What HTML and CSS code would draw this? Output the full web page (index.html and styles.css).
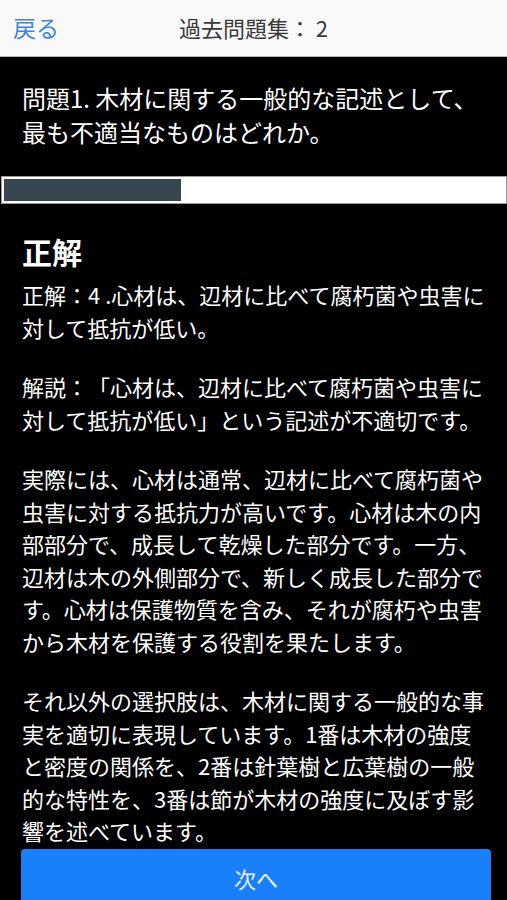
FILE: index.html
```html
<!DOCTYPE html>
<html lang="ja">
<head>
  <meta charset="UTF-8" />
  <meta name="viewport" content="width=device-width, initial-scale=1.0" />
  <title>過去問題集： 2</title>
  <link rel="stylesheet" href="styles.css">
</head>
<body>
  <header class="nav">
    <a class="back" href="#">戻る</a>
    <h1 class="nav-title">過去問題集： 2</h1>
    <span></span>
  </header>

  <section class="question">
    <p>問題1. 木材に関する一般的な記述として、最も不適当なものはどれか。</p>
  </section>

  <div class="progress">
    <div class="progress-fill"></div>
  </div>

  <section class="answer">
    <h2 class="answer-title">正解</h2>
    <p>正解：4 .心材は、辺材に比べて腐朽菌や虫害に対して抵抗が低い。</p>
    <p>解説：「心材は、辺材に比べて腐朽菌や虫害に対して抵抗が低い」という記述が不適切です。</p>
    <p>実際には、心材は通常、辺材に比べて腐朽菌や虫害に対する抵抗力が高いです。心材は木の内部部分で、成長して乾燥した部分です。一方、辺材は木の外側部分で、新しく成長した部分です。心材は保護物質を含み、それが腐朽や虫害から木材を保護する役割を果たします。</p>
    <p>それ以外の選択肢は、木材に関する一般的な事実を適切に表現しています。1番は木材の強度と密度の関係を、2番は針葉樹と広葉樹の一般的な特性を、3番は節が木材の強度に及ぼす影響を述べています。</p>
  </section>

  <div class="footer">
    <button class="next">次へ</button>
  </div>
</body>
</html>
```

FILE: styles.css
```css
body {
  margin: 0;
  background: #000;
  color: #fff;
  font-family: "Noto Sans CJK JP", "Noto Sans", sans-serif;
  text-spacing-trim: space-all;
}

.nav {
  height: 56px;
  background: #f9f9f9;
  border-bottom: 1px solid #b5b5b5;
  display: grid;
  grid-template-columns: 1fr auto 1fr;
  align-items: center;
  padding: 0 13px;
}

.back {
  color: #3e86d8;
  font-size: 23px;
  line-height: 30px;
  margin-bottom: 3px;
  text-decoration: none;
}

.nav-title {
  margin: 0 0 3px;
  font-size: 22px;
  line-height: 30px;
  font-weight: normal;
  color: #3a3a3a;
}

.question {
  padding: 0 16px 0 22px;
}

.question p {
  margin: 24px 0 0;
  font-size: 24px;
  line-height: 34px;
}

.progress {
  margin: 27px 0 0 1px;
  height: 22px;
  padding: 2px;
  background: #fff;
  border: 1px solid #9a9a9a;
}

.progress-fill {
  width: 177px;
  height: 100%;
  background: #37474f;
}

.answer {
  padding: 0 16px 0 22px;
}

.answer-title {
  margin: 29px 0 9px;
  font-size: 30px;
  line-height: 36px;
  font-weight: bold;
}

.answer p {
  margin: 0 0 27px;
  font-size: 22px;
  line-height: 32.5px;
}

.answer p:last-child {
  margin-bottom: 0;
}

.footer {
  padding: 2px 16px 0 21px;
}

.next {
  display: block;
  width: 100%;
  height: 62px;
  padding-bottom: 4px;
  border: none;
  border-radius: 4px;
  background: #1a7ffb;
  color: #eef4ff;
  font-family: inherit;
  font-size: 22px;
  cursor: pointer;
}
```
